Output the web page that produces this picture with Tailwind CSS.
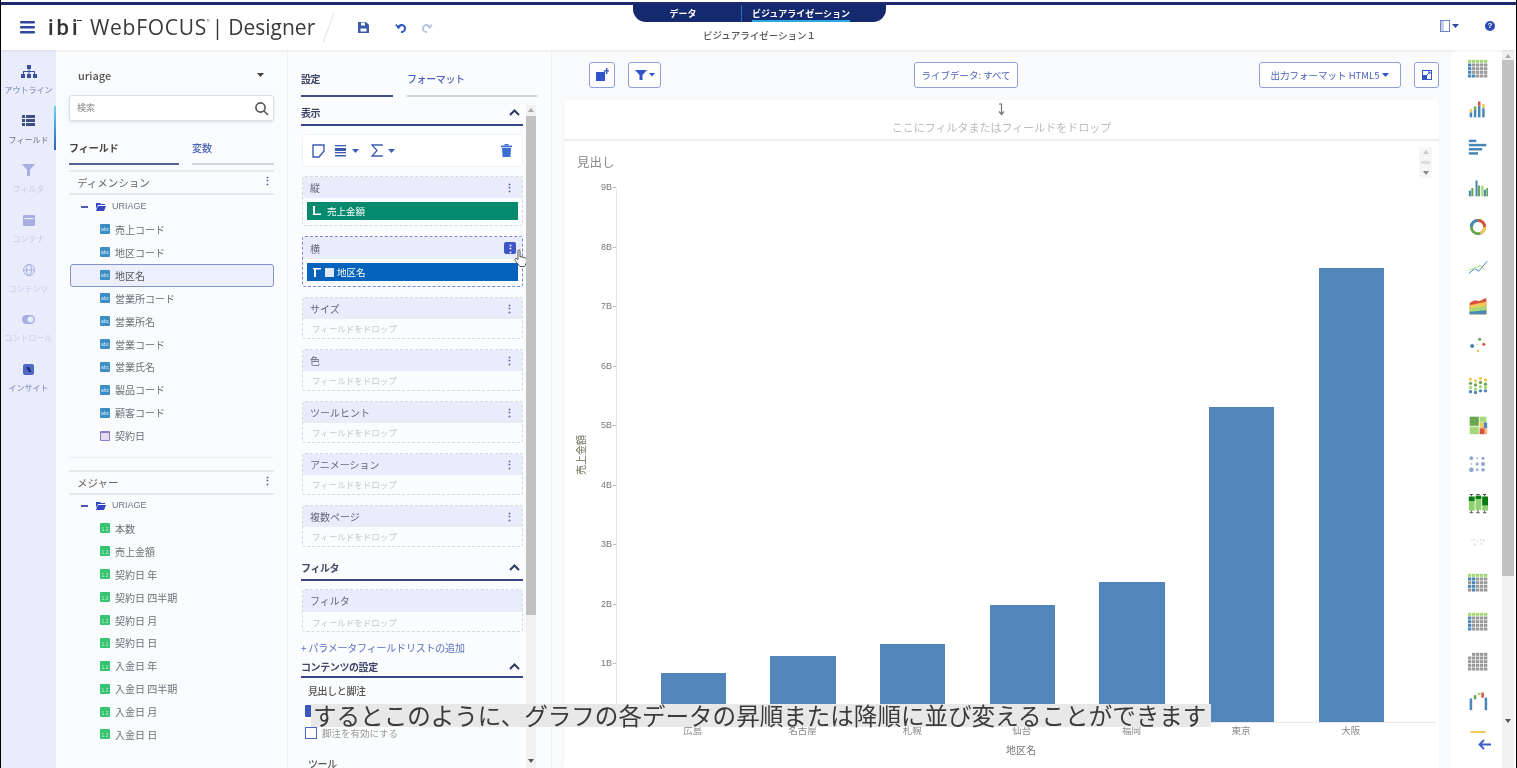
<!DOCTYPE html>
<html lang="ja">
<head>
  <meta charset="UTF-8" />
  <title>WebFOCUS Designer</title>
  <script src="https://cdn.jsdelivr.net/npm/@tailwindcss/browser@4"></script>
</head>
<body class="bg-white">
<div class="relative w-[1517px] h-[768px] overflow-hidden flex flex-col border-x border-black bg-white text-[#4a4f5c] font-['Noto_Sans_CJK_JP','Noto_Sans',sans-serif] blur-[0.55px]">

  <!-- header -->
  <header class="relative h-[50px] shrink-0 bg-white shadow-[0_1px_2px_rgba(0,0,0,0.08)] z-10">
    <div class="mt-[2px] h-[3px] bg-[#1a2a6c]"></div>
    <div class="flex items-center h-[45px] pl-[19px]">
      <svg width="16" height="14" viewBox="0 0 16 14" fill="#31489f"><rect y="0" width="15" height="2.4" rx="1"/><rect y="5" width="15" height="2.4" rx="1"/><rect y="10" width="15" height="2.4" rx="1"/></svg>
      <span class="relative ml-[12px] w-[42px] text-[22px] leading-none tracking-[3px] font-medium text-[#333] font-['Roboto',sans-serif]">ibi<span class="absolute left-[29px] top-[3px] w-[5px] h-[1.5px] bg-[#333]"></span></span>
      <span class="text-[21px] leading-none text-[#3a3a3a] font-['Open_Sans',sans-serif] whitespace-nowrap tracking-[0.7px]">WebFOCUS</span>
      <span class="self-start mt-[14px] text-[6px] leading-none text-[#555]">®</span>
      <span class="ml-[2px] text-[21px] leading-none text-[#3a3a3a] font-['Open_Sans',sans-serif]">|</span>
      <span class="ml-[5px] text-[21px] leading-none text-[#3a3a3a] font-['Open_Sans',sans-serif]">Designer</span>
      <div class="ml-[13px] w-px h-[32px] bg-[#e4e4e4] rotate-[20deg]"></div>
      <svg class="ml-[29px]" width="11" height="11" viewBox="0 0 11 11" fill="#3d5aa8"><path d="M0 0h8l3 3v8H0z"/><rect x="3" y="0.5" width="4" height="3" fill="#fff"/><rect x="2.5" y="6.5" width="6" height="3" fill="#fff"/></svg>
      <svg class="ml-[26px]" width="11" height="12" viewBox="0 0 11 12" fill="none" stroke="#2f55b5" stroke-width="2"><path d="M3 6a3.5 3.5 0 1 1 3 4"/><path d="M1 2.5l2.5 3.5 2.5-3" stroke-width="1.6"/></svg>
      <svg class="ml-[16px]" width="11" height="12" viewBox="0 0 11 12" fill="none" stroke="#b9c6e6" stroke-width="2"><path d="M8 6a3.5 3.5 0 1 0-3 4"/><path d="M10 2.5L7.5 6 5 3" stroke-width="1.6"/></svg>
    </div>
    <div class="absolute top-[5px] left-[632px] w-[253px] h-[17px] bg-[#14296e] rounded-b-[13px] flex text-white text-[9px] font-bold leading-[17px] text-center">
      <div class="w-[109px] pr-[8px] border-r border-[#1f6fb5]">データ</div>
      <div class="flex-1 relative pr-[26px]">ビジュアライゼーション<div class="absolute left-[10px] bottom-0 w-[98px] h-[2px] bg-[#29a9e0]"></div></div>
    </div>
    <div class="absolute top-[28px] left-[632px] w-[253px] text-center text-[9.5px] leading-[14px] font-medium text-[#555]">ビジュアライゼーション１</div>
    <div class="absolute top-[20px] left-[1439px] flex items-center">
      <svg width="11" height="12" viewBox="0 0 11 12" fill="none" stroke="#6f84c4"><rect x="0.5" y="0.5" width="9" height="11"/><rect x="1" y="1" width="3" height="10" fill="#c6d0ea" stroke="none"/></svg>
      <svg class="ml-[1px]" width="7" height="4" viewBox="0 0 7 4" fill="#31489f"><path d="M0 0h7L3.5 4z"/></svg>
      <div class="ml-[26px] w-[10px] h-[10px] rounded-full bg-[#2b4db5] text-white text-[8px] leading-[10px] text-center font-bold font-['Liberation_Sans',sans-serif]">?</div>
    </div>
  </header>

  <div class="flex flex-1 min-h-0">
    <!-- left rail -->
    <nav id="rail" class="w-[55px] shrink-0 bg-[#e9edfb] flex flex-col items-center pt-[13px] relative"></nav>

    <!-- field panel -->
    <aside class="w-[232px] shrink-0 bg-[#fafbfd] border-r border-[#eef0f4] pl-[13px] pr-[13px] text-[10px]">
      <div class="flex items-center justify-between h-[50px] pl-[9px] pr-[10px] text-[11px] font-medium text-[#555]">uriage <svg width="7" height="4" viewBox="0 0 7 4" fill="#444"><path d="M0 0h7L3.5 4z"/></svg></div>
      <div class="-mt-[5px] h-[26px] bg-white border border-[#dcdfe5] rounded-[3px] shadow-sm flex items-center justify-between pl-[7px] pr-[4px] text-[#888] text-[9px]">検索
        <svg width="15" height="15" viewBox="0 0 15 15" fill="none" stroke="#555" stroke-width="1.6"><circle cx="6.5" cy="6.5" r="4.6"/><path d="M10 10l4 4"/></svg>
      </div>
      <div class="flex mt-[18px] h-[26px] pt-[1px] leading-[16px]">
        <div class="w-[110px] border-b-2 border-[#5a628f] font-bold text-[#444]">フィールド</div>
        <div class="ml-[13px] flex-1 border-b-2 border-[#d4d6da] text-[#4a63b8] font-medium">変数</div>
      </div>
      <div class="mt-[5px] h-[25px] border-y-2 border-[#e6e7ea] flex items-center justify-between pl-[8px] pr-[1px] text-[10.5px] text-[#666]">ディメンション <span class="text-[#4a5aa8] font-bold text-[11px] leading-none -mt-[4px]">⋮</span></div>
      <div id="dims"></div>
      <div class="mt-[10px] border-t border-[#eceef1] h-[13px]"></div>
      <div class="h-[25px] border-y-2 border-[#e6e7ea] flex items-center justify-between pl-[8px] pr-[1px] text-[10.5px] text-[#666]">メジャー <span class="text-[#4a5aa8] font-bold text-[11px] leading-none -mt-[4px]">⋮</span></div>
      <div id="meas" class="-mt-[1px]"></div>
    </aside>

    <!-- settings panel -->
    <section class="relative w-[264px] shrink-0 bg-[#fbfcfd] border-r border-[#eef0f4] pl-[13px] text-[10px] overflow-hidden">
      <div class="flex w-[236px] h-[47px] pt-[21px] font-medium">
        <div class="w-[92px] border-b-2 border-[#444f86] font-bold text-[#3d4668] tracking-[-0.4px]">設定</div>
        <div class="ml-[14px] flex-1 border-b-2 border-[#d4d6da] text-[#4a63b8] tracking-[-0.4px]">フォーマット</div>
      </div>
      <div class="w-[222px]">
        <div class="h-[29px] flex items-center justify-between border-b-2 border-[#3c4680] font-bold text-[#3d4668] pr-[3px] pt-[3px] tracking-[-0.4px]">表示
          <svg width="11" height="7" viewBox="0 0 11 7" fill="none" stroke="#2b3a5e" stroke-width="2"><path d="M1 6l4.5-4.5L10 6"/></svg>
        </div>
        <div class="mt-[8px] ml-[1px] h-[33px] bg-white rounded border border-[#f0f1f4] flex items-center pl-[9px] pr-[10px] text-[#3d5bb5]">
          <svg width="13" height="14" viewBox="0 0 13 14" fill="none" stroke="#3d5bb5" stroke-width="1.4"><path d="M1 1h11v6l-5 6H1z"/></svg>
          <svg class="ml-[10px]" width="12" height="12" viewBox="0 0 12 12" fill="#3d5bb5"><rect y="0" width="11" height="1.3"/><rect y="3" width="11" height="3"/><rect y="7" width="11" height="1.3"/><rect y="10" width="11" height="1.5"/></svg>
          <svg class="ml-[5px]" width="7" height="4" viewBox="0 0 7 4" fill="#3d5bb5"><path d="M0 0h7L3.5 4z"/></svg>
          <svg class="ml-[12px]" width="12" height="13" viewBox="0 0 12 13" fill="none" stroke="#3d5bb5" stroke-width="1.3"><path d="M11 2V1H1l5 5.5L1 12h10v-1"/></svg>
          <svg class="ml-[5px]" width="7" height="4" viewBox="0 0 7 4" fill="#3d5bb5"><path d="M0 0h7L3.5 4z"/></svg>
          <svg class="ml-auto" width="11" height="13" viewBox="0 0 11 13" fill="#3d6fd0"><rect x="3.5" y="0" width="4" height="1.5"/><rect x="0" y="1.5" width="11" height="1.8"/><path d="M1 4h9l-.6 9H1.6z"/></svg>
        </div>
        <div id="wells"></div>
        <div class="mt-[8px] h-[26px] flex items-center justify-between border-b-2 border-[#3c4680] font-bold text-[#3d4668] pr-[3px] tracking-[-0.4px]">フィルタ
          <svg width="11" height="7" viewBox="0 0 11 7" fill="none" stroke="#2b3a5e" stroke-width="2"><path d="M1 6l4.5-4.5L10 6"/></svg>
        </div>
        <div class="mt-[8px] ml-[1px] h-[43px] border border-dashed border-[#d6d8de] rounded-[3px]">
          <div class="h-[22px] bg-[#e9edfb] pl-[7px] leading-[22px] text-[#667]">フィルタ</div>
          <div class="pl-[9px] leading-[20px] text-[8.5px] text-[#c4c6cb]">フィールドをドロップ</div>
        </div>
        <div class="mt-[8px] h-[16px] leading-[16px] text-[#5a6fc0] tracking-[-0.2px]">+ パラメータフィールドリストの追加</div>
        <div class="h-[22px] flex items-center justify-between border-b-2 border-[#3c4680] font-bold text-[#3d4668] pr-[3px] tracking-[-0.4px]">コンテンツの設定
          <svg width="11" height="7" viewBox="0 0 11 7" fill="none" stroke="#2b3a5e" stroke-width="2"><path d="M1 6l4.5-4.5L10 6"/></svg>
        </div>
        <div class="mt-[6px] pl-[7px] leading-[14px] font-medium text-[#555] tracking-[-0.4px]">見出しと脚注</div>
        <div class="mt-[6px] ml-[4px] flex items-center h-[14px] text-[#999] text-[9.5px]">
          <span class="w-[12px] h-[12px] bg-[#3a58c0] rounded-[1px]"></span><span class="ml-[5px]">見出しを有効にする</span>
        </div>
        <div class="mt-[8px] ml-[4px] flex items-center h-[14px] text-[#999] text-[9.5px]">
          <span class="w-[12px] h-[12px] border border-[#4a66c4] bg-white"></span><span class="ml-[5px]">脚注を有効にする</span>
        </div>
        <div class="mt-[17px] pl-[7px] leading-[14px] font-medium text-[#555] tracking-[-0.4px]">ツール</div>
      </div>
      <!-- scrollbar -->
      <div class="absolute top-[55px] left-[238px] bottom-0 w-[10px] bg-[#f1f1f1] flex flex-col items-center">
        <span class="mt-[3px] w-0 h-0 border-x-[3px] border-x-transparent border-b-[4px] border-b-[#aaa]"></span>
        <div class="mt-[4px] w-full h-[499px] bg-[#c1c1c1]"></div>
        <span class="mt-[144px] w-0 h-0 border-x-[3px] border-x-transparent border-t-[4px] border-t-[#555]"></span>
      </div>
    </section>

    <!-- canvas -->
    <main class="w-[900px] shrink-0 bg-[#f9fafc] pl-[12px] pr-[13px]">
      <div class="flex items-center h-[50px] pl-[25px] text-[#4a63b8] text-[9.5px]">
        <div class="w-[26px] h-[26px] bg-white border border-[#8ea0d8] rounded-[3px] flex items-center justify-center">
          <svg width="13" height="14" viewBox="0 0 13 14" fill="#2f55c8"><path d="M0 4h8l1-1v10H0z"/><path d="M10 0h1.400v2.200H13.600v1.400h-2.200V6H10V3.600H7.800V2.200H10z"/></svg>
        </div>
        <div class="ml-[13px] w-[33px] h-[26px] bg-white border border-[#8ea0d8] rounded-[3px] flex items-center justify-center gap-[2px]">
          <svg width="12" height="10" viewBox="0 0 12 10" fill="#2f55c8"><path d="M0 0h12L7.500 5v5h-3V5z"/></svg>
          <svg width="6" height="3.5" viewBox="0 0 7 4" fill="#2f55c8"><path d="M0 0h7L3.500 4z"/></svg>
        </div>
        <div class="ml-[253px] w-[104px] h-[26px] bg-white border border-[#8ea0d8] rounded-[3px] text-center leading-[24px]">ライブデータ: すべて</div>
        <div class="ml-[241px] w-[142px] h-[26px] bg-white border border-[#8ea0d8] rounded-[3px] flex items-center justify-center gap-[3px]">出力フォーマット HTML5
          <svg width="7" height="4" viewBox="0 0 7 4" fill="#2f55c8"><path d="M0 0h7L3.500 4z"/></svg>
        </div>
        <div class="ml-[13px] w-[25px] h-[26px] bg-white border border-[#8ea0d8] rounded-[3px] flex items-center justify-center">
          <svg width="10" height="10" viewBox="0 0 10 10"><rect x="0.500" y="0.500" width="9" height="9" fill="#fff" stroke="#2f55c8"/><rect x="0" y="5" width="5" height="5" fill="#2f55c8"/><path d="M5 5l3-3M6 2h2v2" stroke="#2f55c8" fill="none"/></svg>
        </div>
      </div>
      <div class="bg-white rounded-t-[3px] h-[668px] shadow-[0_0_2px_rgba(0,0,0,0.06)]">
        <div class="h-[41px] border-b-2 border-[#eceef1] text-[11px] text-[#b8bbc0] leading-[15px] pt-[3px] flex flex-col items-center">
          <svg class="shrink-0" width="7" height="13" viewBox="0 0 7 13" fill="none" stroke="#777" stroke-width="1.200"><path d="M1 1h2.500v10M1 8.500L3.500 11.500 6 8.500"/></svg>
          <div class="mt-[4px]">ここにフィルタまたはフィールドをドロップ</div>
        </div>
        <div class="relative h-[625px]">
          <div class="pl-[13px] pt-[12px] h-[46px] text-[12.5px] leading-[18px] text-[#8a8a8a]">見出し</div>
          <div class="absolute top-[6px] right-[7px] w-[13px] h-[31px] bg-[#f6f6f6] flex flex-col items-center justify-between py-[3px]">
            <span class="w-0 h-0 border-x-[3px] border-x-transparent border-b-[4px] border-b-[#ccc]"></span>
            <span class="w-[9px] h-[3px] bg-[#ddd]"></span>
            <span class="w-0 h-0 border-x-[3px] border-x-transparent border-t-[4px] border-t-[#888]"></span>
          </div>
          <div class="flex pl-[12px]">
            <div class="w-[10px] h-[536px] flex items-center justify-center"><span class="inline-block shrink-0 -rotate-90 whitespace-nowrap text-[10px] leading-[10px] text-[#6b6a55]">売上金額</span></div>
            <div id="ticks" class="w-[30px] -mt-[5px] text-[9px] leading-[10px] text-[#777] text-right font-['Liberation_Sans',sans-serif]"></div>
            <div class="w-[820px]">
              <div id="bars" class="h-[536px] border-l border-b border-[#e6e8ec] flex items-end pl-[22px]"></div>
              <div id="xlabels" class="flex pl-[22px] text-[9.5px] leading-[14px] text-[#888]"></div>
              <div class="mt-[6px] w-[820px] pr-[10px] text-center text-[10px] leading-[14px] text-[#777]">地区名</div>
            </div>
          </div>
        </div>
      </div>
    </main>

    <!-- chart picker -->
    <aside class="w-[48px] shrink-0 bg-white flex flex-col">
      <div id="picks" class="flex-1 min-h-0 overflow-hidden flex flex-col items-center pt-[9px] gap-[19.5px]"></div>
      <div class="h-[35px] shrink-0 bg-white flex items-start justify-center pt-[6px] pl-[17px] relative">
        <svg width="13" height="11" viewBox="0 0 13 11" fill="none" stroke="#3d5bc8" stroke-width="1.800"><path d="M13 5.500H2M6 1L1.500 5.500 6 10"/></svg>
      </div>
    </aside>
    <div class="w-[15px] shrink-0 bg-white pl-[2px]">
      <div class="w-[12px] h-full bg-[#f1f1f1] flex flex-col items-center">
        <span class="mt-[4px] w-0 h-0 border-x-[3px] border-x-transparent border-b-[4px] border-b-[#aaa]"></span>
        <div class="mt-[2px] w-full h-[516px] bg-[#c1c1c1]"></div>
        <span class="mt-[143px] w-0 h-0 border-x-[3px] border-x-transparent border-t-[4px] border-t-[#555]"></span>
      </div>
    </div>
  </div>

  <!-- subtitle over the video -->
  <div class="absolute top-[704px] left-[310px] w-[900px] h-[23px] bg-[#e8e8e8] pl-[2px] text-[23.55px] leading-[23px] text-[#3a3a3a] whitespace-nowrap z-20">するとこのように、グラフの各データの昇順または降順に並び変えることができます</div>
</div>

<script>
const railItems = [
  ["アウトライン", '<svg width="16" height="13" viewBox="0 0 16 13" fill="#3a4f9c"><rect x="6" y="0" width="4" height="4"/><rect x="0" y="9" width="4" height="4"/><rect x="6" y="9" width="4" height="4"/><rect x="12" y="9" width="4" height="4"/><path d="M7.500 4h1v2h5.500v3h-1V7H8.500v2h-1V7H3v2H2V6h5.500z"/></svg>', "text-[#6f7fb5]"],
  ["フィールド", '<svg width="13" height="11" viewBox="0 0 13 11" fill="#3f4f86"><rect width="3" height="3"/><rect x="4" width="9" height="3"/><rect y="4" width="3" height="3"/><rect x="4" y="4" width="9" height="3"/><rect y="8" width="3" height="3"/><rect x="4" y="8" width="9" height="3"/></svg>', "text-[#6a7088]"],
  ["フィルタ", '<svg width="13" height="12" viewBox="0 0 13 12" fill="#a6afe0"><path d="M0 0h13L8 6v6H5V6z"/></svg>', "text-[#c3c9ea]"],
  ["コンテナ", '<svg width="12" height="11" viewBox="0 0 12 11" fill="#a6afe0"><rect width="12" height="11" rx="1"/><rect x="1.500" y="3" width="9" height="1.200" fill="#e9edfb"/></svg>', "text-[#c3c9ea]"],
  ["コンテンツ", '<svg width="12" height="12" viewBox="0 0 12 12" fill="none" stroke="#a6afe0"><circle cx="6" cy="6" r="5.500"/><ellipse cx="6" cy="6" rx="2.500" ry="5.500"/><path d="M0 6h12"/></svg>', "text-[#c3c9ea]"],
  ["コントロール", '<svg width="13" height="9" viewBox="0 0 13 9"><rect width="13" height="9" rx="4.500" fill="#a6afe0"/><circle cx="8.500" cy="4.500" r="3" fill="#e9edfb"/></svg>', "text-[#c3c9ea]"],
  ["インサイト", '<svg width="11" height="11" viewBox="0 0 11 11"><rect width="11" height="11" rx="2" fill="#5068c8"/><path d="M3 3h3l2 4v1H6z" fill="#1d2a6c"/></svg>', "text-[#6f7fb5]"],
];
document.getElementById("rail").innerHTML = railItems.map(([label, icon, color]) =>
  `<div class="h-[49.7px] w-full flex flex-col items-center">
     <div class="h-[16px] flex items-center">${icon}</div>
     <div class="mt-[5px] text-[8px] leading-[12px] whitespace-nowrap ${color}">${label}</div>
   </div>`).join("") +
  '<div class="absolute top-[56px] right-0 w-[2px] h-[44px] bg-gradient-to-b from-[#6fd6ee] to-[#2a62b8]"></div>';

const minus = '<span class="w-[7px] h-[2px] bg-[#4a5aa8]"></span>';
const folder = '<svg class="ml-[8px]" width="10" height="8" viewBox="0 0 10 8" fill="#3347c0"><path d="M0 0h4l1 1h4v1H2L0 6zM2 3h8L8 8H0z"/></svg>';
const treeHead = `<div class="h-[23px] pt-[1px] flex items-center pl-[12px] text-[9px] text-[#6d7686] font-['Liberation_Sans',sans-serif]">${minus}${folder}<span class="ml-[6px]">URIAGE</span></div>`;
const abc = `<span class="w-[10px] h-[10px] bg-[#3b8fc6] rounded-[1px] shrink-0 text-center text-[5px] leading-[10px] text-white/80 font-['Liberation_Sans',sans-serif]">abc</span>`;
const cal = '<span class="w-[10px] h-[10px] bg-[#e4dcf5] border border-[#8d7cc4] border-t-2 rounded-[1px] shrink-0"></span>';
const num = `<span class="w-[10px] h-[10px] bg-[#35c46f] rounded-[1px] shrink-0 text-center text-[5px] leading-[12px] text-white/70 font-['Liberation_Sans',sans-serif]">1.2</span>`;

function row(text, icon) {
  return `<div class="h-[22.9px] flex items-center pl-[31px] text-[#6b6f78]">${icon}<span class="ml-[5px]">${text}</span></div>`;
}
const dims = ["売上コード","地区コード","地区名","営業所コード","営業所名","営業コード","営業氏名","製品コード","顧客コード"];
document.getElementById("dims").innerHTML = treeHead + dims.map(d => d === "地区名"
  ? `<div class="h-[23px] ml-[1px] flex items-center pl-[29px] bg-[#edf0fc] border border-[#8093cf] rounded-[3px] text-[#555]">${abc}<span class="ml-[5px]">${d}</span></div>`
  : row(d, abc)).join("") + row("契約日", cal);

const meas = ["本数","売上金額","契約日 年","契約日 四半期","契約日 月","契約日 日","入金日 年","入金日 四半期","入金日 月","入金日 日"];
document.getElementById("meas").innerHTML = treeHead + meas.map(m => row(m, num)).join("");

const dots = '<span class="text-[#4a5aa8] font-bold text-[11px] leading-none">⋮</span>';
const wells = ["サイズ","色","ツールヒント","アニメーション","複数ページ"];
document.getElementById("wells").innerHTML =
  `<div class="mt-[9px] ml-[1px] h-[50px] border border-dashed border-[#d6d8de] rounded-[3px]">
     <div class="h-[21px] bg-[#e9edfb] flex items-center justify-between pl-[7px] pr-[7px] text-[#667]">縦 ${dots}</div>
     <div class="mt-[4px] mx-[4px] h-[18px] bg-[#068a6d] flex items-center pl-[5px] text-white text-[9.5px]"><svg width="9" height="10" viewBox="0 0 9 10" fill="#fff"><rect x="1" width="2" height="9"/><rect x="1" y="7.500" width="8" height="1.500"/></svg><span class="ml-[6px]">売上金額</span></div>
   </div>
   <div class="relative mt-[10px] ml-[1px] h-[51px] border border-dashed border-[#7d86c6] rounded-[3px]">
     <div class="h-[22px] bg-[#e9edfb] flex items-center justify-between pl-[7px] pr-[6px] text-[#667]">横 <span class="w-[12px] h-[12px] rounded-[2px] bg-[#3d55c8] text-white text-[11px] leading-[12px] font-bold text-center">⋮</span></div>
     <div class="mt-[4px] mx-[4px] h-[18px] bg-[#0562bd] flex items-center pl-[5px] text-white text-[9.5px]"><svg width="10" height="10" viewBox="0 0 10 10" fill="#fff"><rect x="2" y="1" width="2" height="9"/><rect x="1" y="1" width="8" height="1.500"/></svg><span class="ml-[3px] w-[9px] h-[9px] bg-[#dfe8f5]"></span><span class="ml-[3px]">地区名</span></div>
     <svg class="absolute left-[211px] top-[12px]" width="15" height="19" viewBox="0 0 15 19" fill="#fff" stroke="#444" stroke-width="0.900"><path d="M4 1.500c1-1 2-.5 2 .5v6l1-.3 1 .3 1 .2 1 .3 1.500.5c1 .5 1 1.500 1 2.500 0 2-1 5-2 6H6C5 16 2 13 1 11c-.5-1 .5-2 1.500-1.500L4 10.500z"/></svg>
   </div>` +
  wells.map(w => `<div class="mt-[10px] ml-[1px] h-[42px] border border-dashed border-[#d6d8de] rounded-[3px]">
     <div class="h-[21px] bg-[#e9edfb] flex items-center justify-between pl-[7px] pr-[7px] text-[#667]">${w} ${dots}</div>
     <div class="pl-[9px] leading-[19px] text-[8.5px] text-[#c4c6cb]">フィールドをドロップ</div>
   </div>`).join("");

document.getElementById("ticks").innerHTML = ["9B","8B","7B","6B","5B","4B","3B","2B","1B"].map(t =>
  `<div class="h-[59.5px] flex justify-end items-start"><span>${t}</span><span class="mt-[5px] ml-[1px] w-[3px] h-px bg-[#bbb]"></span></div>`).join("");

const data = [["広島",49],["名古屋",66],["札幌",78],["仙台",117],["福岡",140],["東京",315],["大阪",454]];
document.getElementById("bars").innerHTML = data.map(([_, h]) =>
  `<div class="w-[109.67px] flex justify-center"><div class="w-[65.5px] -ml-[1px] bg-[#5286ba]" style="height:${h}px"></div></div>`).join("");
document.getElementById("xlabels").innerHTML = data.map(([n]) =>
  `<div class="w-[109.67px] text-center">${n}</div>`).join("");

// chart picker thumbnails, drawn on a 24x24 grid
const rects = list => list.map(([x,y,w,h,c]) => `<rect x="${x}" y="${y}" width="${w}" height="${h}" fill="${c}"/>`).join("");
function grid(fn) {
  const out = [];
  for (let r = 0; r < 5; r++) for (let c = 0; c < 5; c++) out.push([c*4.8, r*4.4+1, 4, 3.6, fn(r,c)]);
  return rects(out);
}
const B="#4a86b8",G="#9a9a9a",L="#a5d977",R="#d9533a",Y="#f0c95a",D="#0a7a12",M="#6aa84f";
const circ = list => list.map(([x,y,r,c]) => `<circle cx="${x}" cy="${y}" r="${r}" fill="${c}"/>`).join("");
const picks = [
  grid((r,c) => r===0 ? L : c===0 ? B : r===4&&c<2 ? B : G),
  rects([[2,16,3,6,B],[2,12,3,4,Y],[7,13,3,9,B],[7,9,3,4,M],[12,8,3,14,B],[12,3,3,5,R],[17,11,3,11,B],[17,6,3,5,Y]]),
  rects([[1,2,9,3,B],[1,7,21,3,B],[1,12,16,3,B],[1,17,11,3,B]]),
  rects([[1,15,2.5,7,B],[4,12,2.5,10,M],[9,3,2.5,19,B],[12,9,2.5,13,M],[16,9,2.5,13,L],[19,14,2.5,8,B],[22,12,2,10,M]]),
  '<circle cx="12" cy="12" r="8" fill="none" stroke="#6aa84f" stroke-width="3.5"/><path d="M12 4a8 8 0 0 1 8 8" fill="none" stroke="#d9533a" stroke-width="3.5"/><path d="M20 12a8 8 0 0 1-5 7.5" fill="none" stroke="#f0c95a" stroke-width="3.5"/><path d="M4 12a8 8 0 0 1 8-8" fill="none" stroke="#4a86b8" stroke-width="3.5"/>',
  '<path d="M1 20l7-6 5 3 10-12" fill="none" stroke="#4a86b8" stroke-width="1.2"/><path d="M1 16l8-3 6-3 5 6" fill="none" stroke="#a5d977" stroke-width="1.2"/>',
  '<path d="M2 8l6-3 6 1 8-4v20H2z" fill="#d9533a"/><path d="M2 11l20-4v15H2z" fill="#f0c95a"/><path d="M2 15l20-3v10H2z" fill="#a5d977"/><path d="M2 19l20-2v5H2z" fill="#4a86b8"/>',
  circ([[5,12,2.5,B],[14,4,1.8,M],[19,10,1.8,R],[12,18,1.5,Y],[11,10,.8,L]]),
  circ([[3,5,2,Y],[3,10,2,M],[3,15,2,L],[3,20,2,B],[9,7,2,Y],[9,12,2,M],[9,17,2,L],[9,21,2,B],[15,4,2,Y],[15,9,2,M],[15,14,2,L],[15,19,2,B],[21,6,2,Y],[21,11,2,M],[21,15,2,L],[21,19,2,B]]),
  rects([[2,2,11,11,M],[14,2,8,7,L],[2,14,11,9,L],[14,9,5,7,Y],[19,9,4,7,B],[14,16,6,7,R],[20,16,3,7,"#f4b183"]]),
  circ([[4,5,2.2,"#8fa8cc"],[11,5,1,"#8fa8cc"],[18,5,1.8,"#8fa8cc"],[4,12,1,"#8fa8cc"],[11,12,1.8,"#8fa8cc"],[18,12,2.5,"#8fa8cc"],[4,19,2.8,"#8fa8cc"],[11,19,1.5,"#8fa8cc"],[18,19,2.2,"#8fa8cc"]]),
  rects([[2,0,4,1,"#333"],[3.5,1,1,2,"#333"],[1,3,7,6,D],[1,9,7,11,"#8fd16f"],[3.5,20,1,2,"#333"],[2,22,4,1,"#333"],[10,0,4,1,"#333"],[11.5,1,1,1,"#333"],[9,2,7,4,D],[9,6,7,13,"#8fd16f"],[11.5,19,1,3,"#333"],[10,22,4,1,"#333"],[18,0,4,1,"#333"],[19.5,1,1,2,"#333"],[17,3,7,11,D],[17,14,7,6,"#8fd16f"],[19.5,20,1,2,"#333"],[18,22,4,1,"#333"]]),
  circ([[4,9,1,"#e3e6ec"],[7,8,1.5,"#e3e6ec"],[11,10,1.2,"#e3e6ec"],[15,8,1.5,"#e3e6ec"],[19,9,1.5,"#e3e6ec"],[8,14,1.5,"#e3e6ec"],[16,13,1.5,"#e3e6ec"]]),
  grid((r,c) => r===0 ? L : (c===0&&(r===1||r===3)) ? B : (c===1&&r<5) ? B : G),
  grid((r,c) => r===0 ? L : c===0 ? B : G),
  grid((r,c) => (r===0&&c===0) ? "#fff" : G),
  rects([[2,9,3,14,B],[7,5,3,5,M],[12,2,3,3,L],[16,2,3,6,R],[20,8,3,15,B]]),
  rects([[3,0,18,5,Y]]),
];
document.getElementById("picks").innerHTML = picks.map(s =>
  `<svg class="shrink-0 ml-[4px]" width="22" height="20" viewBox="0 0 24 24">${s}</svg>`).join("");
</script>
</body>
</html>
